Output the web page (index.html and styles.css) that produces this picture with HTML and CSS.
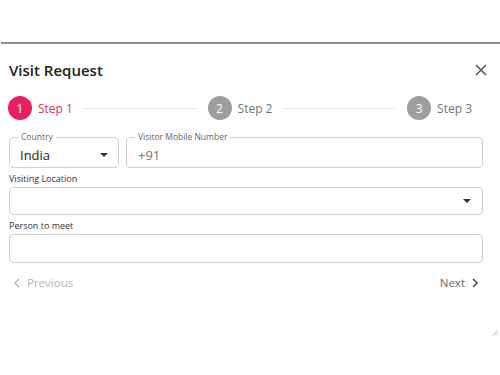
FILE: index.html
```html
<!DOCTYPE html>
<html lang="en">
<head>
  <meta charset="UTF-8">
  <meta name="viewport" content="width=device-width, initial-scale=1.0">
  <title>Visit Request</title>
  <link rel="stylesheet" href="styles.css">
</head>
<body>
  <div class="dialog">
    <div class="dialog-head">
      <h1 class="dialog-title">Visit Request</h1>
      <button class="close-button" aria-label="Close">
        <svg width="12" height="12" viewBox="0 0 12 12"><path d="M1 1L11 11M11 1L1 11" stroke="#555" stroke-width="1.5" fill="none"/></svg>
      </button>
    </div>

    <!-- Stepper -->
    <div class="stepper">
      <div class="step active"><span class="step-num">1</span><span class="step-label">Step 1</span></div>
      <div class="step-line"></div>
      <div class="step"><span class="step-num">2</span><span class="step-label">Step 2</span></div>
      <div class="step-line"></div>
      <div class="step"><span class="step-num">3</span><span class="step-label">Step 3</span></div>
    </div>

    <div class="form">
      <div class="row">
        <fieldset class="field country">
          <legend>Country</legend>
          <div class="field-value">
            <span>India</span>
            <span class="caret"></span>
          </div>
        </fieldset>
        <fieldset class="field mobile">
          <legend>Visitor Mobile Number</legend>
          <div class="field-value muted">+91</div>
        </fieldset>
      </div>

      <label class="label">Visiting Location</label>
      <div class="box select-box"><span class="caret"></span></div>

      <label class="label">Person to meet</label>
      <div class="box input-box"></div>
    </div>

    <div class="footer">
      <button class="nav-button prev">
        <svg width="6" height="10" viewBox="0 0 6 10"><path d="M5 1L1 5L5 9" stroke="#b5b5b5" stroke-width="1.4" fill="none"/></svg>
        Previous
      </button>
      <button class="nav-button next">
        Next
        <svg width="6" height="10" viewBox="0 0 6 10"><path d="M1 1L5 5L1 9" stroke="#555" stroke-width="1.6" fill="none"/></svg>
      </button>
    </div>

    <div class="resize">
      <svg width="6" height="6" viewBox="0 0 6 6"><path d="M5.5 0.5L0.5 5.5M5.5 3L3 5.5" stroke="#aaa" stroke-width="0.8" fill="none"/></svg>
    </div>
  </div>
</body>
</html>
```

FILE: styles.css
```css
body {
  margin: 0;
  font-family: "Open Sans", "Noto Sans", Arial, sans-serif;
  background-color: #ffffff;
  color: #222;
}

.dialog {
  margin-top: 42px;
  margin-left: 1px;
  border-top: 2px solid #8e8e8e;
  padding: 0 17px 0 8px;
}

.dialog-head {
  display: flex;
  align-items: center;
  justify-content: space-between;
  height: 52px;
}

.dialog-title {
  margin: 0;
  font-size: 15px;
  font-weight: 600;
  color: #222;
}

.close-button {
  background: none;
  border: none;
  padding: 0;
  margin-right: -4px;
  display: flex;
  cursor: pointer;
}

/* Stepper */
.stepper {
  display: flex;
  align-items: center;
  height: 24px;
  margin-left: -1px;
  padding-right: 11px;
}

.step {
  display: flex;
  align-items: center;
  gap: 6px;
}

.step-num {
  width: 24px;
  height: 24px;
  border-radius: 50%;
  background-color: #9e9e9e;
  color: #fff;
  font-size: 12px;
  display: flex;
  align-items: center;
  justify-content: center;
}

.step-label {
  font-size: 12px;
  color: #757575;
}

.step.active .step-num {
  background-color: #e91e63;
}

.step.active .step-label {
  color: #d6336c;
}

.step-line {
  flex: 1;
  height: 1px;
  background-color: #e4e4e4;
  margin: 0 12px 0 11px;
}

/* Form */
.form {
  margin-top: 11px;
}

.row {
  display: flex;
  gap: 7px;
}

.field {
  margin: 0;
  padding: 0 10px 0 10px;
  border: 1px solid #cfcfcf;
  border-radius: 4px;
  height: 37px;
  box-sizing: border-box;
  min-width: 0;
}

.field legend {
  font-size: 8.5px;
  line-height: 12px;
  color: #666;
  padding: 0 3px;
  margin-left: -2px;
}

.country {
  width: 110px;
}

.mobile {
  flex: 1;
}

.field-value {
  display: flex;
  align-items: center;
  justify-content: space-between;
  font-size: 13px;
  line-height: 20px;
  margin-top: 2px;
  color: #222;
}

.field-value.muted {
  color: #777;
  font-size: 13px;
  margin-left: 1px;
}

.caret {
  width: 0;
  height: 0;
  border-left: 4px solid transparent;
  border-right: 4px solid transparent;
  border-top: 4px solid #333;
}

.label {
  display: block;
  font-size: 9px;
  line-height: 12px;
  color: #333;
  margin-top: 5px;
}

.box {
  border: 1px solid #cfcfcf;
  border-radius: 4px;
  box-sizing: border-box;
  margin-top: 2px;
}

.select-box {
  height: 28px;
  display: flex;
  align-items: center;
  justify-content: flex-end;
  padding-right: 11px;
}

.input-box {
  height: 29px;
}

/* Footer */
.footer {
  display: flex;
  justify-content: space-between;
  margin-top: 12px;
  padding: 0 5px 0 5px;
}

.nav-button {
  display: flex;
  align-items: center;
  gap: 7px;
  background: none;
  border: none;
  padding: 0;
  font-family: inherit;
  font-size: 11.5px;
  cursor: pointer;
}

.prev {
  color: #b5b5b5;
}

.next {
  color: #666;
}

.resize {
  display: flex;
  justify-content: flex-end;
  margin: 40px -15px 0 0;
}
```
